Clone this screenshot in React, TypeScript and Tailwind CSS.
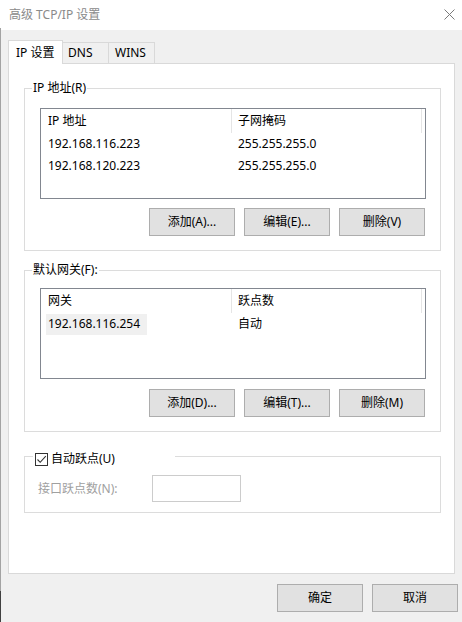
import React from 'react';

type Row = { cells: string[]; selected?: boolean };

const FONT = "font-['Noto_Sans','Noto_Sans_CJK_SC',sans-serif]";

function WinButton( { label, className = '' }: { label: string; className?: string } ) {
	return (
		<button
			type="button"
			className={ `h-[28px] w-[86px] border border-[#adadad] bg-[#e1e1e1] text-[12px] leading-[16px] text-black ${ className }` }
		>
			{ label }
		</button>
	);
}

function ListBox( { headers, rows }: { headers: string[]; rows: Row[] } ) {
	return (
		<div className="ml-[15px] h-[91px] w-[386px] border border-[#828790] bg-white">
			<div className="flex h-[24px]">
				<div className="flex w-[191px] items-center border-r border-[#e5e5e5] pl-[7px]">
					{ headers[ 0 ] }
				</div>
				<div className="flex w-[190px] items-center border-r border-[#e5e5e5] pl-[6px]">
					{ headers[ 1 ] }
				</div>
			</div>
			{ rows.map( ( row ) => (
				<div key={ row.cells[ 0 ] } className="flex h-[22px]">
					<div className="flex w-[191px] items-center pl-[5px]">
						{ row.selected ? (
							<span className="flex h-[21px] w-[101px] items-center bg-[#f0f0f0] pl-[2px]">
								{ row.cells[ 0 ] }
							</span>
						) : (
							<span className="pl-[2px]">{ row.cells[ 0 ] }</span>
						) }
					</div>
					<div className="flex items-center pl-[6px]">{ row.cells[ 1 ] }</div>
				</div>
			) ) }
		</div>
	);
}

function ButtonRow( { labels, top }: { labels: string[]; top: string } ) {
	return (
		<div className={ `flex justify-end gap-[9px] pr-[15px] ${ top }` }>
			{ labels.map( ( label ) => (
				<WinButton key={ label } label={ label } />
			) ) }
		</div>
	);
}

export default function App() {
	return (
		<div className={ `flex h-[622px] w-[462px] text-[12px] leading-[16px] text-black ${ FONT }` }>
			{ /* window edge */ }
			<div className="flex w-px flex-col">
				<div className="h-[28px] bg-white" />
				<div className="flex-1 bg-[#a3a3a3]" />
				<div className="h-[31px] bg-[#404040]" />
			</div>

			<div className="flex flex-1 flex-col">
				{ /* title bar */ }
				<div className="flex h-[30px] items-center justify-between bg-white pl-[8px] pr-[7px]">
					<span className="text-[#8a8a8a]">高级 TCP/IP 设置</span>
					<svg width="11" height="11" viewBox="0 0 11 11" className="mb-px">
						<path d="M0.5 0.5 L10.5 10.5 M10.5 0.5 L0.5 10.5" stroke="#7a7a7a" strokeWidth="1" fill="none" />
					</svg>
				</div>

				<div className="flex flex-1 flex-col bg-[#f0f0f0] px-[7px] pt-[10px]">
					{ /* tabs */ }
					<div className="relative z-10 -mb-px flex h-[24px] items-end">
						<div className="flex h-[24px] w-[55px] items-center border border-b-0 border-[#d9d9d9] bg-white pl-[7px]">
							IP 设置
						</div>
						<div className="mb-px flex h-[21px] w-[46px] items-center border border-b-0 border-l-0 border-[#d9d9d9] pl-[5px]">
							DNS
						</div>
						<div className="mb-px flex h-[21px] w-[46px] items-center border border-b-0 border-l-0 border-[#d9d9d9] pl-[6px]">
							WINS
						</div>
					</div>

					{ /* tab page */ }
					<div className="flex h-[511px] flex-col border border-[#d9d9d9] bg-white pl-[15px] pt-[16px]">
						<fieldset className="w-[417px] border border-[#dcdcdc] pb-[14px]">
							<legend className="ml-[7px] px-[1px] leading-[16px]">IP 地址(R)</legend>
							<div className="mt-[12px]">
								<ListBox
									headers={ [ 'IP 地址', '子网掩码' ] }
									rows={ [
										{ cells: [ '192.168.116.223', '255.255.255.0' ] },
										{ cells: [ '192.168.120.223', '255.255.255.0' ] },
									] }
								/>
							</div>
							<ButtonRow top="mt-[9px]" labels={ [ '添加(A)...', '编辑(E)...', '删除(V)' ] } />
						</fieldset>

						<fieldset className="mt-[11px] w-[417px] border border-[#dcdcdc] pb-[14px]">
							<legend className="ml-[7px] px-[1px] leading-[16px]">默认网关(F):</legend>
							<div className="mt-[10px]">
								<ListBox
									headers={ [ '网关', '跃点数' ] }
									rows={ [ { cells: [ '192.168.116.254', '自动' ], selected: true } ] }
								/>
							</div>
							<ButtonRow top="mt-[10px]" labels={ [ '添加(D)...', '编辑(T)...', '删除(M)' ] } />
						</fieldset>

						<fieldset className="mt-[13px] w-[417px] border border-[#dcdcdc] pb-[10px]">
							<legend className="ml-[8px] w-[142px] pl-[2px] pt-[6px]">
								<div className="flex h-[16px] items-center gap-[3px]">
									<span className="flex h-[13px] w-[13px] items-center justify-center border border-[#333333] bg-white">
										<svg width="11" height="11" viewBox="0 0 11 11">
											<path d="M1.5 5.5 L4.2 8.3 L9.8 2.2" stroke="#333333" strokeWidth="1.1" fill="none" />
										</svg>
									</span>
									<span>自动跃点(U)</span>
								</div>
							</legend>
							<div className="mt-[8px] flex items-center pl-[13px]">
								<span className="w-[114px] text-[#a0a0a0]">接口跃点数(N):</span>
								<div className="h-[27px] w-[89px] border border-[#cccccc] bg-white" />
							</div>
						</fieldset>
					</div>

					{ /* dialog buttons */ }
					<div className="mt-[10px] flex justify-end gap-[9px] pr-[-3px]">
						<WinButton label="确定" />
						<WinButton label="取消" className="-mr-[3px]" />
					</div>
				</div>
			</div>
		</div>
	);
}
